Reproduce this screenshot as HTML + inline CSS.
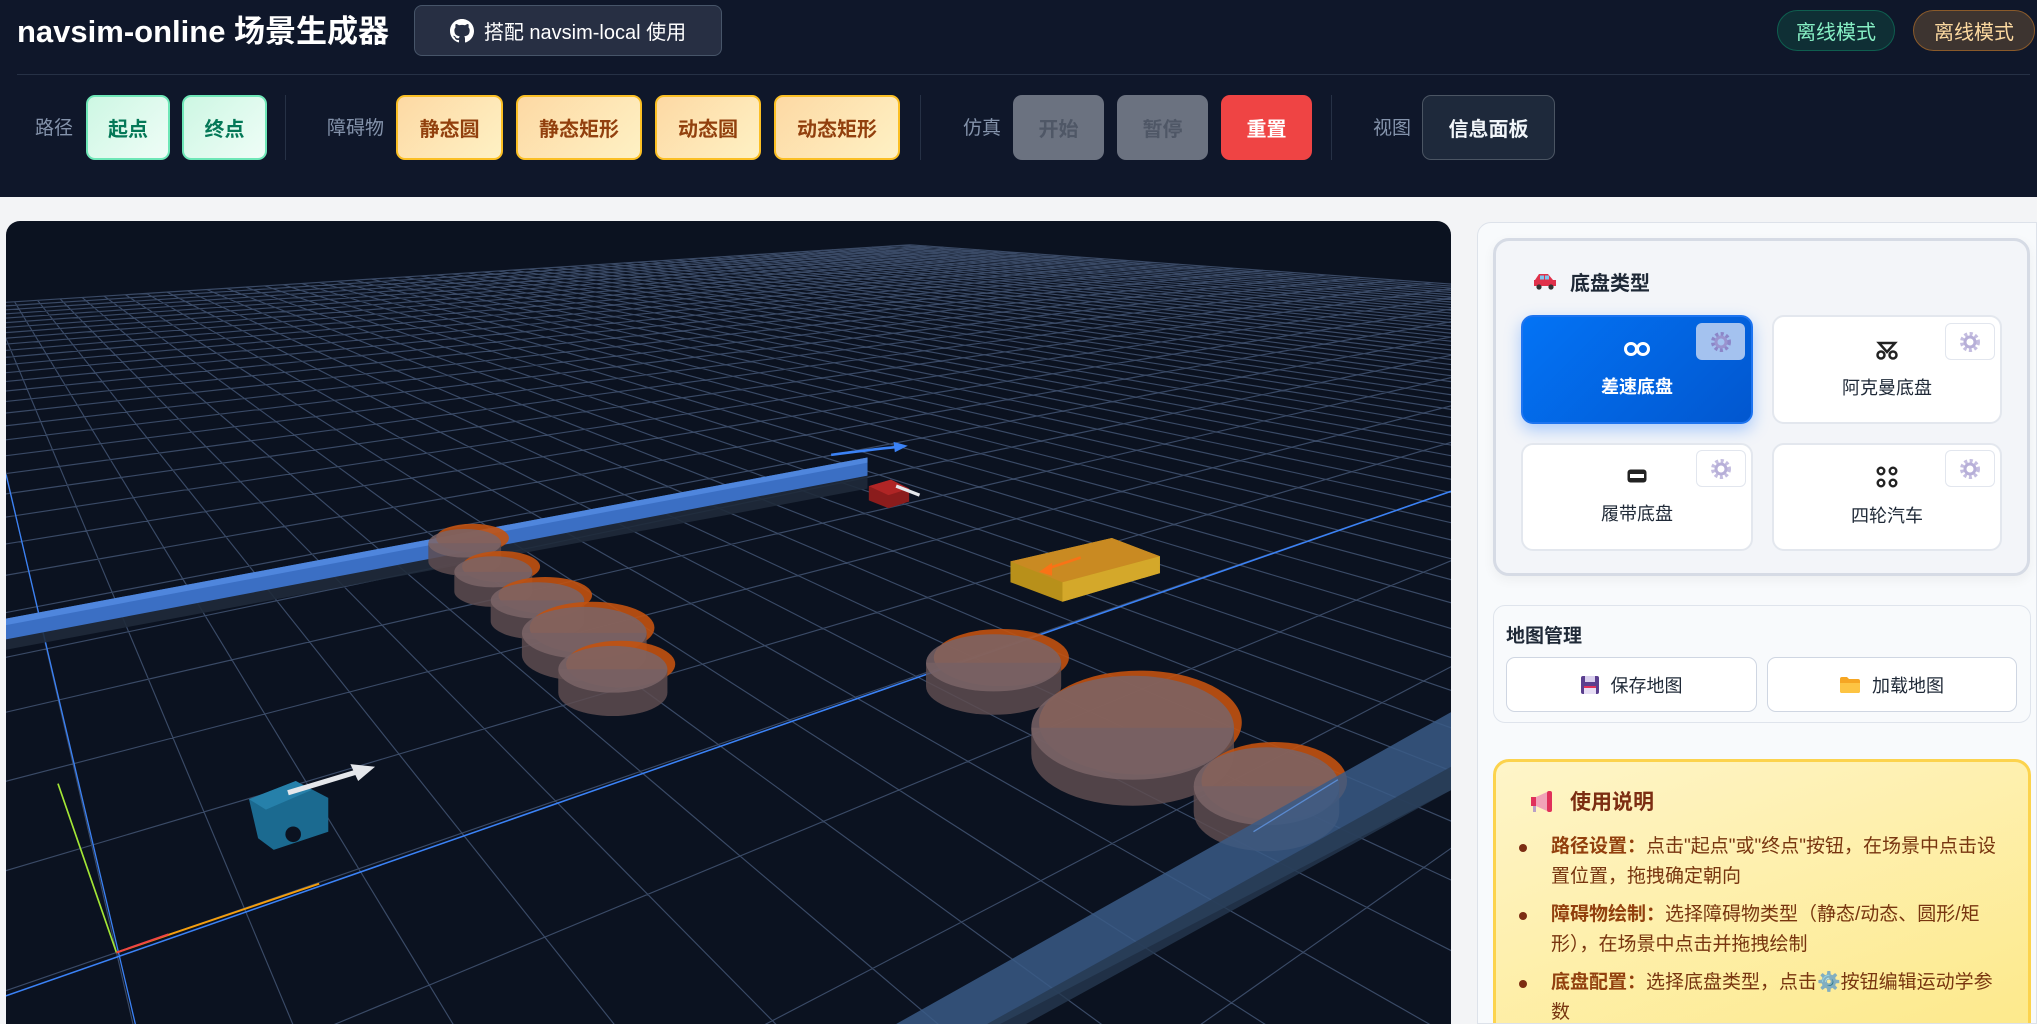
<!DOCTYPE html>
<html><head><meta charset="utf-8">
<style>
*{box-sizing:border-box;margin:0;padding:0}
body{width:2037px;height:1024px;overflow:hidden;background:#f3f4f6;font-family:"Liberation Sans","Noto Sans CJK SC",sans-serif;position:relative}
.a{position:absolute}
#hdr{left:0;top:0;width:2037px;height:197px;background:#0f172a}
.title{left:17px;top:11px;color:#fff;font-size:31px;font-weight:bold;line-height:42px;white-space:nowrap}
.gh{left:414px;top:5px;width:308px;height:51px;background:#272f43;border:1px solid #475569;border-radius:8px;color:#fff;font-size:20px;display:flex;align-items:center;justify-content:center;gap:10px}
.div{left:17px;top:74px;width:2013px;height:1px;background:#263145}
.lbl{color:#8493ab;font-size:19px;top:117px;line-height:24px}
.btn{top:95px;height:65px;border-radius:9px;display:flex;align-items:center;justify-content:center;font-size:20px;font-weight:bold}
.g{background:linear-gradient(135deg,#cdf7e3,#effdf7);border:2px solid #6ee7b7;color:#047857}
.y{background:linear-gradient(135deg,#fdd9a4,#fef1c4);border:2px solid #fbbf24;color:#92400e}
.gr{background:#6b7280;color:#4f5766}
.sep{top:95px;width:1px;height:65px;background:#263145}
.pill{top:10px;height:41px;border-radius:21px;font-size:20px;display:flex;align-items:center;justify-content:center}
#cv{left:6px;top:221px;width:1445px;height:803px;background:#0b1220;border-radius:14px 14px 0 0;overflow:hidden}
#rp{left:1477px;top:222px;width:560px;height:802px;background:#f8fafc;border:1px solid #dde2ea;border-radius:14px 0 0 0;overflow:hidden}
.card{background:#fff;border:2px solid #e3e7ee;border-radius:12px;display:flex;flex-direction:column;align-items:center;justify-content:center;font-size:18px;color:#1f2937}
.gear{width:50px;height:37px;border:1px solid #e2e6ee;border-radius:6px;background:#fff;display:flex;align-items:center;justify-content:center}
.mb{background:#fff;border:1.5px solid #cfd6e2;border-radius:9px;display:flex;align-items:center;justify-content:center;gap:12px;font-size:18px;color:#1f2937}
li{list-style:none;position:relative;padding-left:38px;font-size:19px;line-height:30px;color:#78350f;margin-bottom:8px}
li:before{content:"";position:absolute;left:6px;top:12px;width:8px;height:8px;border-radius:50%;background:#7c2d12}
li b{color:#92400e}
</style></head><body>
<div id="hdr" class="a"></div>
<div class="a title">navsim-online 场景生成器</div>
<div class="a gh"><svg width="24" height="24" viewBox="0 0 16 16"><path fill="#fff" d="M8 0C3.58 0 0 3.58 0 8c0 3.54 2.29 6.53 5.47 7.59.4.07.55-.17.55-.38v-1.33c-2.23.48-2.7-1.07-2.7-1.07-.36-.92-.89-1.17-.89-1.17-.73-.5.06-.49.06-.49.8.06 1.23.83 1.23.83.72 1.22 1.87.87 2.33.66.07-.52.28-.87.51-1.07-1.78-.2-3.65-.89-3.65-3.95 0-.87.31-1.59.82-2.15-.08-.2-.36-1.02.08-2.12 0 0 .67-.21 2.2.82a7.6 7.6 0 0 1 4 0c1.53-1.04 2.2-.82 2.2-.82.44 1.1.16 1.92.08 2.12.51.56.82 1.27.82 2.15 0 3.07-1.87 3.75-3.65 3.95.29.25.54.73.54 1.48v2.2c0 .21.15.46.55.38A8 8 0 0 0 16 8c0-4.42-3.58-8-8-8z"/></svg>搭配 navsim-local 使用</div>
<div class="a pill" style="left:1777px;width:118px;background:#0f2f35;border:1px solid #0f5e4f;color:#86efc4">离线模式</div>
<div class="a pill" style="left:1913px;width:122px;background:#3d3430;border:1px solid #8a5a2a;color:#fcd9a0">离线模式</div>
<div class="a div"></div>
<div class="a lbl" style="left:35px">路径</div>
<div class="a btn g" style="left:86px;width:84px">起点</div>
<div class="a btn g" style="left:182px;width:85px">终点</div>
<div class="a sep" style="left:285px"></div>
<div class="a lbl" style="left:327px">障碍物</div>
<div class="a btn y" style="left:396px;width:107px">静态圆</div>
<div class="a btn y" style="left:516px;width:126px">静态矩形</div>
<div class="a btn y" style="left:655px;width:106px">动态圆</div>
<div class="a btn y" style="left:774px;width:126px">动态矩形</div>
<div class="a sep" style="left:920px"></div>
<div class="a lbl" style="left:963px">仿真</div>
<div class="a btn gr" style="left:1013px;width:91px">开始</div>
<div class="a btn gr" style="left:1117px;width:91px">暂停</div>
<div class="a btn" style="left:1221px;width:91px;background:#ef4444;color:#fff">重置</div>
<div class="a sep" style="left:1331px"></div>
<div class="a lbl" style="left:1373px">视图</div>
<div class="a btn" style="left:1422px;width:133px;background:#1e293b;border:1px solid #4b5563;color:#f1f5f9">信息面板</div>

<div id="cv" class="a">
<svg id="sv" width="1445" height="803" viewBox="5 170 1112 618" preserveAspectRatio="none">
<g id="grid" stroke="#3a4a66" stroke-width="0.9" fill="none"></g>
<line x1="-20" y1="775" x2="1117" y2="378" stroke="#3b82f6" stroke-width="1.2"/>
<line x1="5" y1="365" x2="105" y2="790" stroke="#3b82f6" stroke-width="1"/>
<line x1="45" y1="603" x2="90" y2="733" stroke="#a3e635" stroke-width="1.3"/>
<line x1="90" y1="733" x2="246" y2="680" stroke="#f59e0b" stroke-width="1.5"/>
<line x1="90" y1="733" x2="130" y2="719" stroke="#ef4444" stroke-width="1.5"/>
<polygon points="5,485 668,366 668,376 5,500" fill="#1f2a3a" opacity=".9"/>
<polygon points="5,476 668,352 668,366 5,492" fill="#3b6fc4"/>
<polygon points="5,476 668,352 668,356 5,481" fill="#4f86dd"/>
<path d="M640,350 Q670,346 690,344" stroke="#3b82f6" stroke-width="2" fill="none"/>
<polygon points="688,340 699,343 689,348" fill="#3b82f6"/>
<polygon points="669,374 686,369 700,376 700,386 684,391 669,385" fill="#8b1c1c"/>
<polygon points="669,374 686,369 700,376 684,381" fill="#b02525"/>
<line x1="690" y1="374" x2="708" y2="381" stroke="#e5e7eb" stroke-width="2.5"/>
<polygon points="778,432 856,414 893,428 893,441 818,463 778,448" fill="#b8901a"/>
<polygon points="778,432 856,414 893,428 818,448" fill="#c98a22"/>
<polygon points="818,448 893,428 893,441 818,463" fill="#d4a82a"/>
<line x1="832" y1="429" x2="805" y2="438" stroke="#f97316" stroke-width="2"/>
<polygon points="800,440 810,433 810,443" fill="#f97316"/>
<g id="cyl"></g>
<polygon points="690,788 1117,548 1117,608 770,788" fill="#3a5a86" opacity=".85"/>
<polygon points="760,788 1117,590 1117,608 790,788" fill="#263850" opacity=".8"/>
<line x1="965" y1="640" x2="1030" y2="600" stroke="#5a8ad0" stroke-width="1"/>
<polygon points="192,615 228,601 253,614 253,640 211,654 199,645" fill="#1b6a90"/>
<polygon points="192,615 228,601 240,608 205,623" fill="#2680aa"/>
<circle cx="226" cy="642" r="6" fill="#0b1220"/>
<line x1="222" y1="610" x2="275" y2="594" stroke="#e5e7eb" stroke-width="4"/>
<polygon points="270,588 289,590 276,601" fill="#e5e7eb"/>
</svg>
</div>

<div id="rp" class="a">
 <div class="a" style="left:15px;top:15px;width:537px;height:338px;background:#f3f5f9;border:3px solid #d6dbe5;border-radius:16px;box-shadow:0 4px 12px rgba(0,0,0,.05)"></div>
 <svg class="a" style="left:55px;top:49px" width="24" height="18" viewBox="0 0 24 18"><path d="M2 8 L6 2 H15 L20 8 H23 V14 H1 V8Z" fill="#e0314b"/><rect x="7" y="3.5" width="4" height="4" fill="#7dc6f0"/><rect x="12" y="3.5" width="4" height="4" fill="#7dc6f0"/><circle cx="6" cy="15" r="2.6" fill="#333"/><circle cx="18" cy="15" r="2.6" fill="#333"/></svg>
 <div class="a" style="left:92px;top:44px;font-size:20px;font-weight:bold;color:#1f2937">底盘类型</div>
 <div class="a card" style="left:43px;top:92px;width:232px;height:109px;background:linear-gradient(135deg,#0373f5,#0257cf);border:2px solid #1d74f0;box-shadow:0 6px 16px rgba(30,120,255,.35);color:#fff;font-weight:bold">
  <svg width="28" height="16" viewBox="0 0 28 16"><circle cx="8" cy="8" r="5.5" stroke="#fff" stroke-width="3" fill="none"/><circle cx="20" cy="8" r="5.5" stroke="#fff" stroke-width="3" fill="none"/></svg><div style="margin-top:16px">差速底盘</div></div>
 <div class="a" style="left:218px;top:100px;width:49px;height:37px;background:#a4c2ef;border-radius:6px;display:flex;align-items:center;justify-content:center"><svg width="22" height="22" viewBox="0 0 22 22"><circle cx="11" cy="11" r="8" fill="none" stroke="#8b86c8" stroke-width="4" stroke-dasharray="3 2.3"/><circle cx="11" cy="11" r="5" fill="none" stroke="#9a94cf" stroke-width="3"/></svg></div>
 <div class="a card" style="left:294px;top:92px;width:230px;height:109px"><svg width="22" height="20" viewBox="0 0 22 20"><path d="M3 3H19L11 12Z" fill="none" stroke="#222" stroke-width="2.5"/><circle cx="5" cy="15" r="3.5" fill="none" stroke="#222" stroke-width="2.5"/><circle cx="17" cy="15" r="3.5" fill="none" stroke="#222" stroke-width="2.5"/></svg><div style="margin-top:14px">阿克曼底盘</div></div>
 <div class="a card" style="left:43px;top:220px;width:232px;height:108px"><svg width="22" height="16" viewBox="0 0 22 16"><rect x="1.5" y="1.5" width="19" height="13" rx="3" fill="#222"/><rect x="4" y="6" width="14" height="4" fill="#fff"/></svg><div style="margin-top:16px">履带底盘</div></div>
 <div class="a card" style="left:294px;top:220px;width:230px;height:108px"><svg width="22" height="22" viewBox="0 0 22 22"><g fill="none" stroke="#222" stroke-width="2.4"><circle cx="5" cy="5" r="3.3"/><circle cx="17" cy="5" r="3.3"/><circle cx="5" cy="17" r="3.3"/><circle cx="17" cy="17" r="3.3"/></g></svg><div style="margin-top:14px">四轮汽车</div></div>
 <div class="a gear" style="left:218px;top:227px"><svg width="22" height="22" viewBox="0 0 22 22"><circle cx="11" cy="11" r="8" fill="none" stroke="#c4bde0" stroke-width="4" stroke-dasharray="3 2.3"/><circle cx="11" cy="11" r="5" fill="none" stroke="#b7afd8" stroke-width="3"/></svg></div>
 <div class="a gear" style="left:467px;top:100px"><svg width="22" height="22" viewBox="0 0 22 22"><circle cx="11" cy="11" r="8" fill="none" stroke="#c4bde0" stroke-width="4" stroke-dasharray="3 2.3"/><circle cx="11" cy="11" r="5" fill="none" stroke="#b7afd8" stroke-width="3"/></svg></div>
 <div class="a gear" style="left:467px;top:227px"><svg width="22" height="22" viewBox="0 0 22 22"><circle cx="11" cy="11" r="8" fill="none" stroke="#c4bde0" stroke-width="4" stroke-dasharray="3 2.3"/><circle cx="11" cy="11" r="5" fill="none" stroke="#b7afd8" stroke-width="3"/></svg></div>

 <div class="a" style="left:15px;top:382px;width:538px;height:118px;background:#f8fafc;border:1.5px solid #dfe4ec;border-radius:12px"></div>
 <div class="a" style="left:28px;top:398px;font-size:19px;font-weight:bold;color:#1f2937">地图管理</div>
 <div class="a mb" style="left:28px;top:434px;width:251px;height:55px"><svg width="18" height="18" viewBox="0 0 18 18"><rect x="0" y="0" width="18" height="18" rx="2" fill="#5b3f8f"/><rect x="4" y="0" width="10" height="6" fill="#d9cfee"/><rect x="3" y="10" width="12" height="8" fill="#e7def5"/><rect x="3" y="10" width="12" height="2" fill="#e0315b"/></svg>保存地图</div>
 <div class="a mb" style="left:289px;top:434px;width:250px;height:55px"><svg width="20" height="16" viewBox="0 0 20 16"><path d="M0 2Q0 0 2 0H7L9 2H18Q20 2 20 4V14Q20 16 18 16H2Q0 16 0 14Z" fill="#f6a623"/><path d="M0 6H20V14Q20 16 18 16H2Q0 16 0 14Z" fill="#fdc443"/></svg>加载地图</div>

 <div class="a" style="left:15px;top:536px;width:538px;height:280px;background:linear-gradient(160deg,#fef5c9,#fde98a);border:3px solid #fcd34d;border-radius:16px"></div>
 <svg class="a" style="left:53px;top:568px" width="24" height="22" viewBox="0 0 24 22"><rect x="0" y="6" width="5" height="9" fill="#e0315b"/><path d="M5 6 L16 1 V20 L5 15Z" fill="#f1a3b8"/><rect x="16" y="0" width="5" height="21" rx="2" fill="#e0315b"/><rect x="2" y="15" width="3" height="6" fill="#b9a0c8"/></svg>
 <div class="a" style="left:92px;top:563px;font-size:21px;font-weight:bold;color:#7c2d12">使用说明</div>
 <ul class="a" style="left:35px;top:609px;width:490px">
  <li><b>路径设置：</b>点击"起点"或"终点"按钮，在场景中点击设置位置，拖拽确定朝向</li>
  <li><b>障碍物绘制：</b>选择障碍物类型（静态/动态、圆形/矩形），在场景中点击并拖拽绘制</li>
  <li><b>底盘配置：</b>选择底盘类型，点击⚙️按钮编辑运动学参数</li>
 </ul>
</div>

<script>
(function(){
var NS="http://www.w3.org/2000/svg";
var V1=[1884,113],V2=[-48,134],O=[90,733],s1=0.029,s2=0.08;
function P(x,y){var d=s1*x+s2*y+1;return[(s1*x*V1[0]+s2*y*V2[0]+O[0])/d,(s1*x*V1[1]+s2*y*V2[1]+O[1])/d,d];}
var g=document.getElementById("grid"),xF=126,yF=62,xm=-60,ym=-80,e=0.02,s="";
for(var j=ym;j<=yF;j+=2){var a=Math.max(xm,(e-1-s2*j)/s1);if(a>=xF)continue;var p=P(a,j),q=P(xF,j);s+="M"+p[0].toFixed(1)+","+p[1].toFixed(1)+"L"+q[0].toFixed(1)+","+q[1].toFixed(1);}
for(var i=xm;i<=xF;i+=2){var b=Math.max(ym,(e-1-s1*i)/s2);if(b>=yF)continue;var p=P(i,b),q=P(i,yF);s+="M"+p[0].toFixed(1)+","+p[1].toFixed(1)+"L"+q[0].toFixed(1)+","+q[1].toFixed(1);}
var path=document.createElementNS(NS,"path");path.setAttribute("d",s);g.appendChild(path);
var c=document.getElementById("cyl");
var cy=[[358,418,28,11,14],[380,440,30,12,15],[414,462,36,14,16],[450,487,48,20,17],[472,515,42,18,18],[765,510,52,22,18],[872,560,78,40,20],[975,605,56,30,20]];
var h="";
cy.forEach(function(k){var x=k[0],y=k[1],rx=k[2],ry=k[3],t=k[4];
h+='<ellipse cx="'+(x+6)+'" cy="'+(y-4)+'" rx="'+rx+'" ry="'+ry+'" fill="#c2520f" opacity=".9"/>';
h+='<path d="M'+(x-rx)+','+y+' V'+(y+t)+' A'+rx+','+ry+' 0 0 0 '+(x+rx)+','+(y+t)+' V'+y+'Z" fill="#5e4c50" opacity=".85"/>';
h+='<ellipse cx="'+x+'" cy="'+y+'" rx="'+rx+'" ry="'+ry+'" fill="#7a6467" opacity=".85"/>';});
c.innerHTML=h;
})();
</script>
</body></html>
